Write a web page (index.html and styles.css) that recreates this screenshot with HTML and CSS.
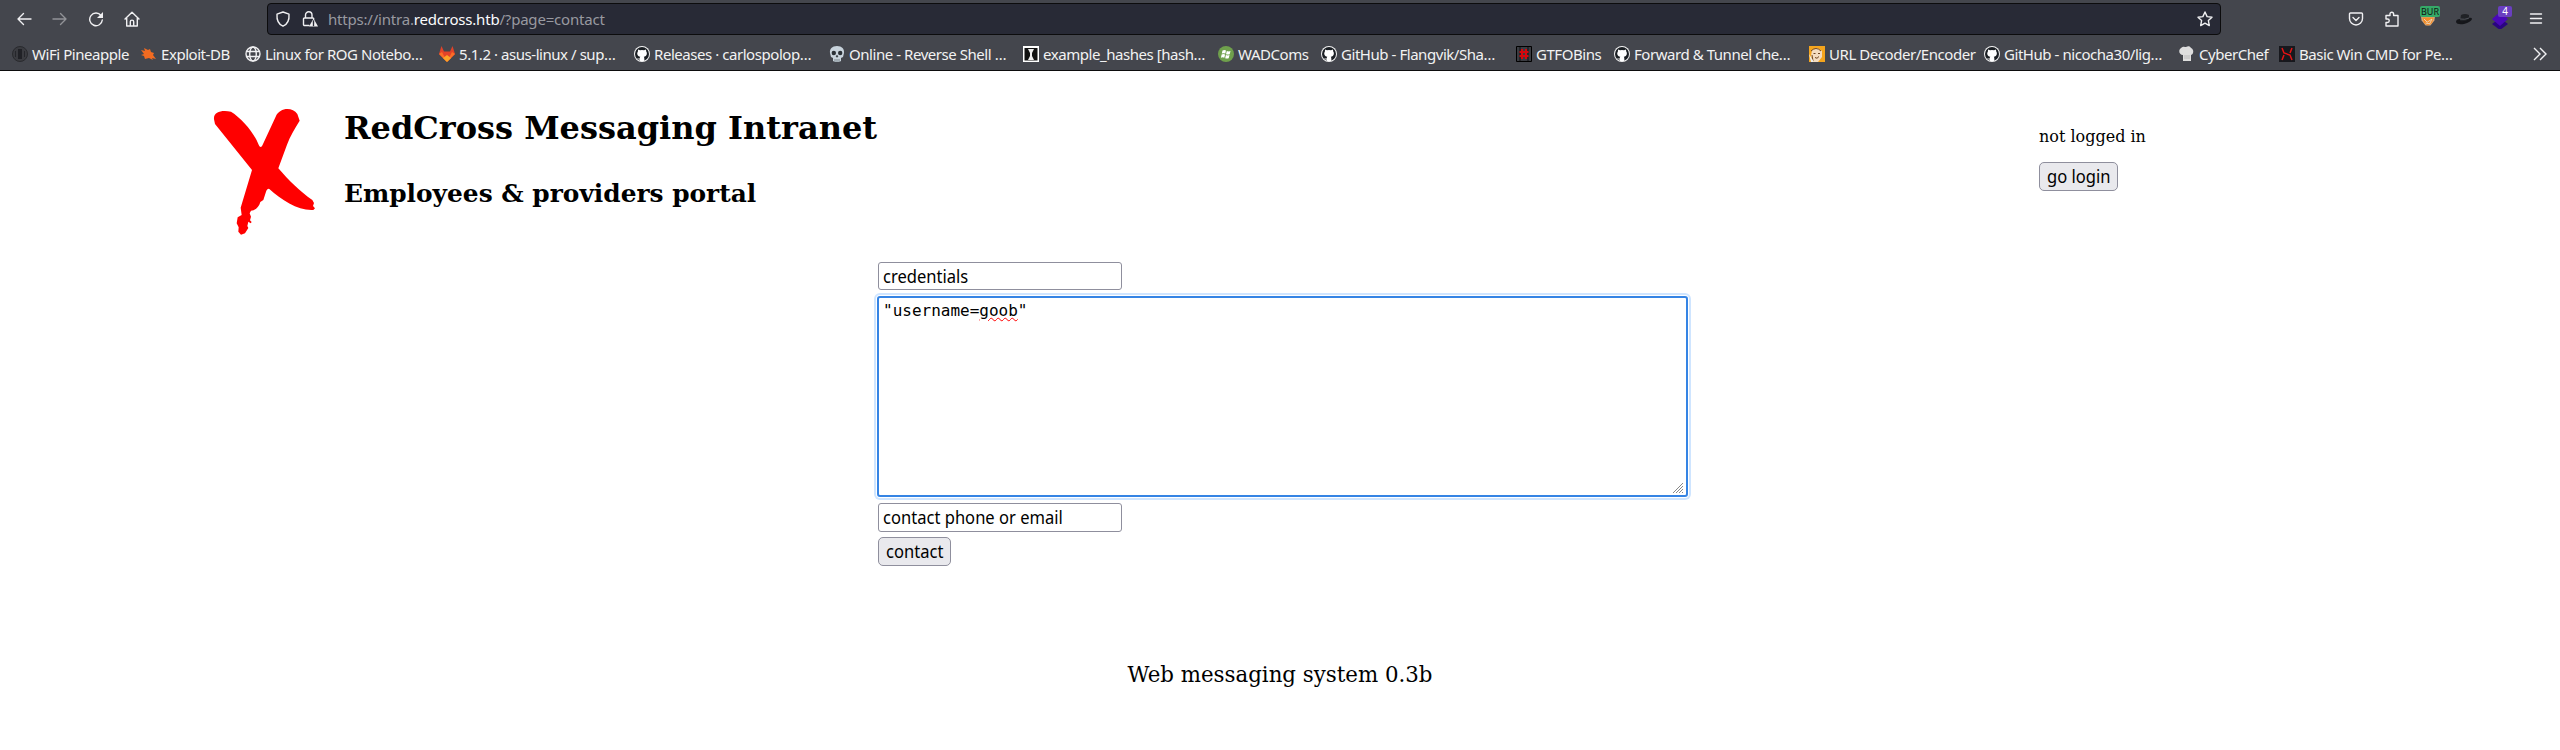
FILE: index.html
```
<!DOCTYPE html>
<html lang="en">
<head>
<meta charset="utf-8">
<title>RedCross Messaging Intranet</title>
<link rel="stylesheet" href="styles.css">
</head>
<body>
<svg class="defs" width="0" height="0">
  <symbol id="gh" viewBox="0 0 16 16"><circle cx="8" cy="8" r="8" fill="#f5f5f5"/><circle cx="8" cy="8" r="7" fill="#1b1f24"/><path fill="#fff" d="M4 3.4l2 .9a7 7 0 0 1 4 0l2-.9.2 2.1c1.200 1.400 1 4.800-2.400 5.300.5.6.6 1.200.6 4.300H5.700v-1.700c-1.700.3-2.100-.4-2.700-1.400 1 .1 1.300 1 2.700.6 0-.8.200-1.400.6-1.800C3 10.300 2.700 7 3.900 5.500z"/></symbol>
</svg>
<div class="browser">
  <div class="nav">
    <svg class="ico back" viewBox="0 0 16 16"><path d="M15 8H2M7.500 2.500L2 8l5.500 5.500"/></svg>
    <svg class="ico fwd" viewBox="0 0 16 16"><path d="M1 8h13M8.500 2.500L14 8l-5.500 5.500"/></svg>
    <svg class="ico reload" viewBox="0 0 16 16"><path d="M13 4.500A6.300 6.300 0 1 0 14.300 9"/><path class="solid" d="M15 1v6H9z"/></svg>
    <svg class="ico home" viewBox="0 0 16 16"><path d="M1 8l7-6.800L15 8M2.700 7v8h10.600V7M6.300 15v-4.200a1.700 1.700 0 0 1 3.400 0V15"/></svg>
    <div class="url">
      <svg class="ico" viewBox="0 0 16 16"><path d="M8 1l6 2.200c.4 5-1.500 10-6 12-4.500-2-6.400-7-6-12z"/></svg>
      <svg class="ico lock" viewBox="0 0 16 16"><path d="M3.500 7V4a3 3 0 0 1 6.500 0v3M7 14.500H2.500a1 1 0 0 1-1-1V8a1 1 0 0 1 1-1h8.300a1 1 0 0 1 1 1"/><path class="solid" d="M11.500 7.500l4.500 8H7z"/><path class="dark" d="M11.500 10v2.800M11.500 13.500v1"/></svg>
      <span class="addr">https://intra.<b>redcross.htb</b>/?page=contact</span>
      <svg class="ico star" viewBox="0 0 16 16"><path d="M8 1l2.100 4.600 4.900.6-3.600 3.400.9 5L8 12.200l-4.300 2.400.9-5L1 6.200l4.900-.6z"/></svg>
    </div>
    <div class="tools">
      <svg class="ico" viewBox="0 0 16 16"><path d="M2.500 2h11a1 1 0 0 1 1 1v4.500a6.500 6.500 0 0 1-13 0V3a1 1 0 0 1 1-1zM5 6.500l3 3 3-3"/></svg>
      <svg class="ico" viewBox="0 0 16 16"><path d="M2 6V4.500h4V3a1.800 1.800 0 0 1 3.600 0v1.500H14V15H2v-3.500h1.500a1.700 1.700 0 0 0 0-3.500H2z"/></svg>
      <div class="ext"><svg viewBox="0 0 20 20"><path d="M1 5h18l-1 7-5 6H7l-5-6z" fill="#dba777"/><path d="M3 8h14l-2 7-5 3-5-3z" fill="#f28c28"/><path d="M5 10l4 4 6-4-3 6-5-1" stroke="#e8e1d5" fill="none"/></svg><i class="badge bur">BUR</i></div>
      <svg class="hat" viewBox="0 0 16 12"><path d="M0 9q0-3 4-3l8-1q4-1 4 1-1 3-8 5-7 1-8-2z" fill="#15161a"/><path d="M4 8L5 2q4-2 8 0v4q-4 3-9 2" fill="#202226"/><path d="M4 6q5 1 9-1" stroke="#50535a" fill="none"/></svg>
      <div class="ext"><svg viewBox="0 0 16 20"><path d="M0 15l8-6 8 6-8 6z" fill="#2a0580"/><path d="M0 10l8-7 8 7-8 7z" fill="#4a08b8"/></svg><i class="badge four">4</i></div>
      <svg class="ico" viewBox="0 0 16 16"><path d="M2.500 3h11M2.500 7.500h11M2.500 12h11"/></svg>
    </div>
  </div>
  <div class="marks">
    <a style="width:129px"><svg viewBox="0 0 16 16"><circle cx="8" cy="8" r="7.500" fill="#3a3b40" stroke="#292a2e"/><path d="M6 3h4v10H6z" fill="#202126"/><path d="M3.500 5v6M12.500 5v6" stroke="#25262b"/></svg><span>WiFi Pineapple</span></a>
    <a style="width:104px"><svg viewBox="0 0 16 16"><path fill="#f26b21" d="M0 4l4 1-1-3 4 2 2-1 1 3 3 1-1 2 3 4-4-1 1 2-4-2-4 1-1-3-3-1 3-1z"/></svg><span>Exploit-DB</span></a>
    <a style="width:194px"><svg class="line" viewBox="0 0 16 16"><circle cx="8" cy="8" r="7"/><ellipse cx="8" cy="8" rx="3.300" ry="7"/><path d="M1.500 5.500h13M1.500 10.500h13"/></svg><span>Linux for ROG Notebo…</span></a>
    <a style="width:195px"><svg viewBox="0 0 16 16"><path fill="#e24329" d="M2.500 0L5 5.500h6L13.500 0 16 8l-8 8-8-8z"/><path fill="#fc6d26" d="M0 8l3-2 5 10zM16 8l-3-2-5 10z"/><path fill="#fca326" d="M4 12l4-3 4 3-4 4z"/></svg><span>5.1.2 · asus-linux / sup…</span></a>
    <a style="width:195px"><svg><use href="#gh"/></svg><span>Releases · carlospolop…</span></a>
    <a style="width:194px"><svg viewBox="0 0 16 16"><path fill="#c8d3dc" d="M8 0c5 0 7.500 3 7 7l-1 4-2 1v3l-2 1H6l-2-1v-3l-2-1-1-4C.500 3 3 0 8 0z"/><circle cx="4.800" cy="7" r="2.200" fill="#2b3137"/><circle cx="11.200" cy="7" r="2.200" fill="#2b3137"/><path d="M8 9l-1 2h2zM6 13v3M8 13v3M10 13v3" stroke="#4b545c" stroke-width=".6"/></svg><span>Online - Reverse Shell …</span></a>
    <a style="width:195px"><svg viewBox="0 0 16 16"><path fill="#fff" d="M0 0h16v16H0z"/><path fill="#111" d="M1.500 2h13v12.500h-13z"/><path fill="#eee" d="M5 3h6L9 7v3l2 4H5l2-4V7z"/></svg><span>example_hashes [hash…</span></a>
    <a style="width:103px"><svg viewBox="0 0 16 16"><circle cx="8" cy="8" r="8" fill="#6fa04c"/><path fill="#fff" d="M4.500 4.500q2-1 3.500 0L7.300 7.600q-2-.8-3.500 0zM8.800 5q2 .8 3.700 0l-.8 3.200q-1.700.8-3.700 0zM3.600 8.500q1.700-.8 3.500 0l-.8 3.200q-1.500-.8-3.400 0zM7.900 9q1.700.8 3.600 0l-.8 3.200q-2 .8-3.500 0z"/></svg><span>WADComs</span></a>
    <a style="width:195px"><svg><use href="#gh"/></svg><span>GitHub - Flangvik/Sha…</span></a>
    <a style="width:98px"><svg viewBox="0 0 16 16"><path fill="#3a3c42" stroke="#000" d="M.5.500h15v15H.500z"/><path d="M4 1v14M12 1v14" stroke="#111" stroke-width="1"/><path d="M6 3v10M10 3v10M3.500 6h9M3.500 10h9" stroke="#d4070c" stroke-width="2"/></svg><span>GTFOBins</span></a>
    <a style="width:195px"><svg><use href="#gh"/></svg><span>Forward &amp; Tunnel che…</span></a>
    <a style="width:175px"><svg viewBox="0 0 16 16"><path fill="#f5a51d" d="M0 0h16v16H0z"/><path fill="#f4dcc0" d="M3 4l5-2 5 3v6l-4 5H5l-3-6z"/><path d="M2 5q5-5 10 0M4.500 7.500h2M9 7.500h2M6 11.500q2 2 4-1M3 9l1 6" stroke="#6e4420" fill="none"/><path d="M0 8l2 8h3z" fill="#efefef"/></svg><span>URL Decoder/Encoder</span></a>
    <a style="width:195px"><svg><use href="#gh"/></svg><span>GitHub - nicocha30/lig…</span></a>
    <a style="width:100px"><svg viewBox="0 0 16 16"><path fill="#dedede" d="M4 9C0 9-1 4 2 2c2-2 4-1 5-1 2-1 4-1 5 1 3 1 3 6 0 7v6H4z"/><path d="M6 9v4M8 9v4M10 9v4" stroke="#bbb"/></svg><span>CyberChef</span></a>
    <a><svg viewBox="0 0 16 16"><path fill="#17181d" d="M0 0h16v16H0z"/><path d="M3 2l2 5 6 2 2 5M13 2l-2 5M5 9l-2 5" stroke="#e41414" stroke-width="1.500" fill="none"/></svg><span>Basic Win CMD for Pe…</span></a>
    <svg class="more line" viewBox="0 0 16 16"><path d="M2 2l6 6-6 6M8 2l6 6-6 6"/></svg>
  </div>
</div>
<header class="head">
  <svg class="logo" viewBox="0 0 360 435"><path fill="#f00" d="M27 58C25 35 50 30 78 35C110 55 145 95 161 134C165 143 169 143 173 134L212 50C224 22 262 20 277 42L284 62C270 85 255 108 246 134L220 205C250 240 285 275 322 300L327 309L324 318L330 325L325 330C280 333 230 300 193 267Q188 265 184 272L175 300L166 306C163 320 150 332 138 332L134 340L138 350L135 361L140 366L137 370L130 365L127 378L130 384L120 400L108 404L100 395L101 382L95 370L98 352L110 345L107 323L141 210L30 72z"/></svg>
  <div class="titles"><h1>RedCross Messaging Intranet</h1><h2>Employees &amp; providers portal</h2></div>
  <div class="login"><p>not logged in</p><button class="btn login-btn"><span class="ui">go login</span></button></div>
</header>
<main class="form">
  <div class="field"><span class="ui">credentials</span></div>
  <div class="area"><span>"username=<u>goob</u>"</span><svg class="grip" viewBox="0 0 12 12"><path d="M1 11L11 1M4 11l7-7M7 11l4-4M10 11l1-1"/></svg></div>
  <div class="field second"><span class="ui">contact phone or email</span></div>
  <button class="btn contact-btn"><span class="ui">contact</span></button>
</main>
<footer class="foot">Web messaging system 0.3b</footer>
</body>
</html>
```
FILE: styles.css
```
* { box-sizing: border-box; }
body { margin: 0; height: 750px; overflow: hidden; background: #fff; color: #000; font-family: "DejaVu Serif", serif; }
.defs { display: block; height: 0; }
.browser { height: 71px; background: #44464d; border-bottom: 1px solid #0c0c0d; color: #f2f2f2; font: 15px "Noto Sans", sans-serif; letter-spacing: -.45px; }
.nav { display: flex; align-items: center; height: 38px; padding-left: 16px; }
.ico { width: 16px; height: 16px; flex: none; fill: none; stroke: #f0f0f2; stroke-width: 1.4; stroke-linejoin: round; stroke-linecap: round; }
.ico .solid { fill: #f0f0f2; stroke: none; }
.ico .dark { stroke: #282a36; }
.back, .reload { margin-right: 20px; }
.fwd { margin-right: 20px; opacity: .45; }
.home { margin-right: 127px; }
.url { display: flex; align-items: center; width: 1954px; height: 32px; padding: 0 7px 0 7px; border: 1px solid #0c0c0d; border-radius: 4px; background: #282a36; }
.lock { margin-left: 11px; }
.addr { margin-left: 10px; color: #9899a0; white-space: nowrap; letter-spacing: -.2px; }
.addr b { font-weight: 400; color: #fbfbfe; }
.star { margin-left: auto; }
.tools { display: flex; align-items: center; margin-left: 127px; gap: 20px; }
.ext { position: relative; width: 16px; height: 20px; }
.ext svg { width: 16px; height: 20px; display: block; }
.badge { position: absolute; height: 11px; font-style: normal; letter-spacing: 0; text-align: center; border-radius: 2px; }
.bur { left: 0; top: -3px; width: 20px; background: #35a968; color: #111; font-size: 9px; line-height: 11px; }
.four { left: 6px; top: -3px; width: 14px; background: #6a3fc0; color: #fff; font-size: 10px; line-height: 11px; }
.hat { width: 16px; height: 12px; }
.marks { display: flex; align-items: center; height: 32px; padding: 0 12px; }
.marks a { display: flex; align-items: center; gap: 4px; flex: none; white-space: nowrap; }
.marks svg { width: 16px; height: 16px; flex: none; }
.line { fill: none; stroke: #f0f0f2; stroke-width: 1.4; }
.marks .more { margin-left: auto; }
.head { display: flex; height: 191px; padding: 29px 0 0 205px; }
.logo { width: 120px; height: 145px; flex: none; }
.titles { width: 1714px; padding: 9px 0 0 19px; }
h1 { margin: 0; font-size: 32px; line-height: 38px; }
h2 { margin: 32px 0 0; font-size: 24.85px; line-height: 30px; }
.login { padding-top: 27px; }
.login p { margin: 0 0 15px; font-size: 16px; line-height: 20px; }
.btn { display: block; height: 29px; padding: 0 7px; border: 1px solid #8f8f9d; border-radius: 5px; background: #e9e9ed; color: #000; font: 18px/27px "Noto Sans", sans-serif; }
.login-btn { width: 79px; }
.contact-btn { width: 73px; }
.ui { display: inline-block; transform: scaleX(.92); transform-origin: left; white-space: nowrap; }
.form { width: 811px; margin-left: 877px; }
.field { width: 244px; height: 28px; margin-left: 1px; padding: 0 4px; border: 1px solid #8f8f9d; border-radius: 3px; font: 18px/27px "Noto Sans", sans-serif; }
.area { display: flex; justify-content: space-between; height: 201px; margin: 6px 0; padding: 3px 2px 1px 4px; border: 2px solid #3584e4; border-radius: 3px; box-shadow: 0 0 0 1px #fff, 0 0 0 3px #cfe5ff; font: 16px/20px "DejaVu Sans Mono", monospace; }
.area u { text-decoration: red wavy underline 1px; text-underline-offset: 1px; }
.grip { width: 12px; height: 12px; align-self: flex-end; stroke: #888; fill: none; }
.second { height: 29px; }
.form .btn { margin: 5px 0 0 1px; }
.foot { margin-top: 96px; text-align: center; font-size: 21.33px; line-height: 26px; }
```
